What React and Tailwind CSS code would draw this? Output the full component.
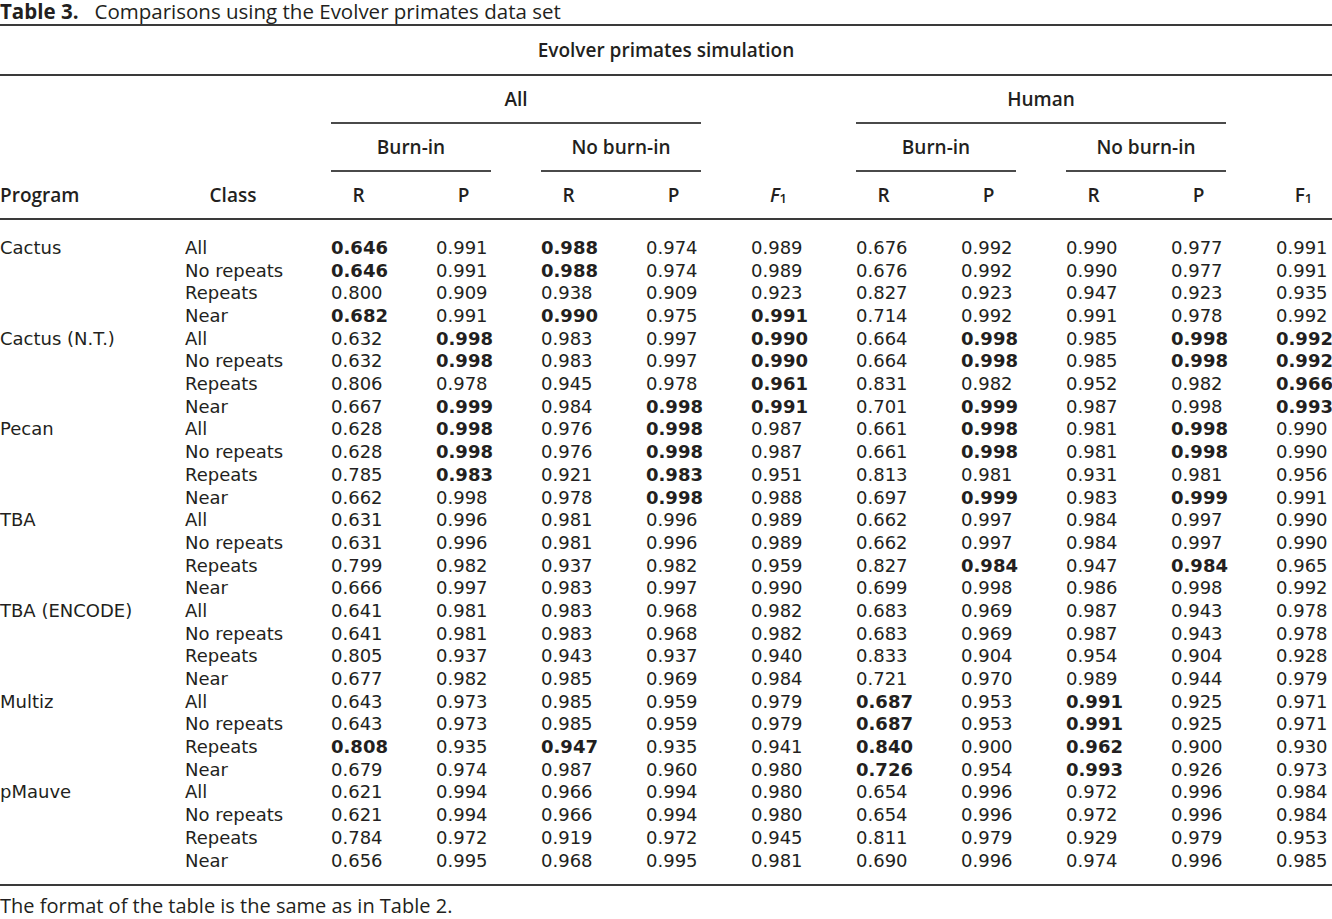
import React from "react";

const B = (v) => ({ v, b: true });

const groups = [
  {
    name: "Cactus",
    rows: [
      ["All", [B("0.646"), "0.991", B("0.988"), "0.974", "0.989", "0.676", "0.992", "0.990", "0.977", "0.991"]],
      ["No repeats", [B("0.646"), "0.991", B("0.988"), "0.974", "0.989", "0.676", "0.992", "0.990", "0.977", "0.991"]],
      ["Repeats", ["0.800", "0.909", "0.938", "0.909", "0.923", "0.827", "0.923", "0.947", "0.923", "0.935"]],
      ["Near", [B("0.682"), "0.991", B("0.990"), "0.975", B("0.991"), "0.714", "0.992", "0.991", "0.978", "0.992"]],
    ],
  },
  {
    name: "Cactus (N.T.)",
    rows: [
      ["All", ["0.632", B("0.998"), "0.983", "0.997", B("0.990"), "0.664", B("0.998"), "0.985", B("0.998"), B("0.992")]],
      ["No repeats", ["0.632", B("0.998"), "0.983", "0.997", B("0.990"), "0.664", B("0.998"), "0.985", B("0.998"), B("0.992")]],
      ["Repeats", ["0.806", "0.978", "0.945", "0.978", B("0.961"), "0.831", "0.982", "0.952", "0.982", B("0.966")]],
      ["Near", ["0.667", B("0.999"), "0.984", B("0.998"), B("0.991"), "0.701", B("0.999"), "0.987", "0.998", B("0.993")]],
    ],
  },
  {
    name: "Pecan",
    rows: [
      ["All", ["0.628", B("0.998"), "0.976", B("0.998"), "0.987", "0.661", B("0.998"), "0.981", B("0.998"), "0.990"]],
      ["No repeats", ["0.628", B("0.998"), "0.976", B("0.998"), "0.987", "0.661", B("0.998"), "0.981", B("0.998"), "0.990"]],
      ["Repeats", ["0.785", B("0.983"), "0.921", B("0.983"), "0.951", "0.813", "0.981", "0.931", "0.981", "0.956"]],
      ["Near", ["0.662", "0.998", "0.978", B("0.998"), "0.988", "0.697", B("0.999"), "0.983", B("0.999"), "0.991"]],
    ],
  },
  {
    name: "TBA",
    rows: [
      ["All", ["0.631", "0.996", "0.981", "0.996", "0.989", "0.662", "0.997", "0.984", "0.997", "0.990"]],
      ["No repeats", ["0.631", "0.996", "0.981", "0.996", "0.989", "0.662", "0.997", "0.984", "0.997", "0.990"]],
      ["Repeats", ["0.799", "0.982", "0.937", "0.982", "0.959", "0.827", B("0.984"), "0.947", B("0.984"), "0.965"]],
      ["Near", ["0.666", "0.997", "0.983", "0.997", "0.990", "0.699", "0.998", "0.986", "0.998", "0.992"]],
    ],
  },
  {
    name: "TBA (ENCODE)",
    rows: [
      ["All", ["0.641", "0.981", "0.983", "0.968", "0.982", "0.683", "0.969", "0.987", "0.943", "0.978"]],
      ["No repeats", ["0.641", "0.981", "0.983", "0.968", "0.982", "0.683", "0.969", "0.987", "0.943", "0.978"]],
      ["Repeats", ["0.805", "0.937", "0.943", "0.937", "0.940", "0.833", "0.904", "0.954", "0.904", "0.928"]],
      ["Near", ["0.677", "0.982", "0.985", "0.969", "0.984", "0.721", "0.970", "0.989", "0.944", "0.979"]],
    ],
  },
  {
    name: "Multiz",
    rows: [
      ["All", ["0.643", "0.973", "0.985", "0.959", "0.979", B("0.687"), "0.953", B("0.991"), "0.925", "0.971"]],
      ["No repeats", ["0.643", "0.973", "0.985", "0.959", "0.979", B("0.687"), "0.953", B("0.991"), "0.925", "0.971"]],
      ["Repeats", [B("0.808"), "0.935", B("0.947"), "0.935", "0.941", B("0.840"), "0.900", B("0.962"), "0.900", "0.930"]],
      ["Near", ["0.679", "0.974", "0.987", "0.960", "0.980", B("0.726"), "0.954", B("0.993"), "0.926", "0.973"]],
    ],
  },
  {
    name: "pMauve",
    rows: [
      ["All", ["0.621", "0.994", "0.966", "0.994", "0.980", "0.654", "0.996", "0.972", "0.996", "0.984"]],
      ["No repeats", ["0.621", "0.994", "0.966", "0.994", "0.980", "0.654", "0.996", "0.972", "0.996", "0.984"]],
      ["Repeats", ["0.784", "0.972", "0.919", "0.972", "0.945", "0.811", "0.979", "0.929", "0.979", "0.953"]],
      ["Near", ["0.656", "0.995", "0.968", "0.995", "0.981", "0.690", "0.996", "0.974", "0.996", "0.985"]],
    ],
  },
];

const GRID = "grid grid-cols-[185px_146px_repeat(9,105px)_1fr]";
const HEAD = "font-['Open_Sans',sans-serif] font-semibold text-[19px] text-[#231f20]";
const BODY = "font-['DejaVu_Sans',sans-serif] text-[18px] text-[#231f20]";

function F1({ italic }) {
  return (
    <span className={italic ? "italic" : ""}>
      F<sub className="text-[13px] not-italic relative top-[1px]">1</sub>
    </span>
  );
}

export default function App() {
  const heads = ["R", "P", "R", "P", "F1i", "R", "P", "R", "P", "F1"];
  return (
    <div className="w-[1332px] h-[919px] bg-white overflow-hidden">
      {/* Title */}
      <div className="h-[24px] leading-[22px] font-['Open_Sans',sans-serif] text-[20.5px] text-[#231f20] whitespace-nowrap">
        <span className="font-bold">Table 3.</span>
        <span className="ml-[16px]">Comparisons using the Evolver primates data set</span>
      </div>
      <div className="h-[2px] bg-[#3a3a3a]" />

      {/* Evolver primates simulation */}
      <div className={`h-[48px] flex items-center justify-center ${HEAD}`}>Evolver primates simulation</div>
      <div className="h-[2px] bg-[#3a3a3a]" />

      {/* All / Human */}
      <div className={`${GRID} h-[48px] ${HEAD}`}>
        <div className="col-start-3 col-span-4 mr-[50px] flex items-center justify-center border-b-2 border-[#4a4a4a]">All</div>
        <div className="col-start-8 col-span-4 mr-[50px] flex items-center justify-center border-b-2 border-[#4a4a4a]">Human</div>
      </div>

      {/* Burn-in */}
      <div className={`${GRID} h-[48px] ${HEAD}`}>
        <div className="col-start-3 col-span-2 mr-[50px] flex items-center justify-center border-b-2 border-[#4a4a4a]">Burn-in</div>
        <div className="col-start-5 col-span-2 mr-[50px] flex items-center justify-center border-b-2 border-[#4a4a4a]">No burn-in</div>
        <div className="col-start-8 col-span-2 mr-[50px] flex items-center justify-center border-b-2 border-[#4a4a4a]">Burn-in</div>
        <div className="col-start-10 col-span-2 mr-[50px] flex items-center justify-center border-b-2 border-[#4a4a4a]">No burn-in</div>
      </div>

      {/* Column header */}
      <div className={`${GRID} h-[46px] items-center ${HEAD}`}>
        <div>Program</div>
        <div className="w-[96px] text-center">Class</div>
        {heads.map((h, i) => (
          <div key={i} className="w-[55px] text-center">
            {h === "F1i" ? <F1 italic /> : h === "F1" ? <F1 /> : h}
          </div>
        ))}
      </div>
      <div className="h-[2px] bg-[#3a3a3a]" />

      {/* Body */}
      <div className={`pt-[16.6px] pb-[12px] ${BODY}`}>
        {groups.map((g) =>
          g.rows.map(([cls, vals], ri) => (
            <div key={g.name + cls} className={`${GRID} h-[22.7px] items-center leading-[22px] whitespace-nowrap`}>
              <div>{ri === 0 ? g.name : ""}</div>
              <div>{cls}</div>
              {vals.map((v, i) =>
                typeof v === "string" ? (
                  <div key={i}>{v}</div>
                ) : (
                  <div key={i} className="font-bold">{v.v}</div>
                )
              )}
            </div>
          ))
        )}
      </div>
      <div className="h-[2px] bg-[#3a3a3a]" />

      {/* Footer */}
      <div className="h-[33px] flex items-end leading-[26px] font-['Open_Sans',sans-serif] text-[20px] text-[#231f20] whitespace-nowrap">
        The format of the table is the same as in Table 2.
      </div>
    </div>
  );
}
